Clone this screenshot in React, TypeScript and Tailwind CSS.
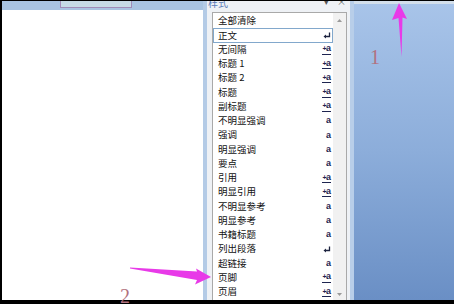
import React from 'react';

type Kind = 'none' | 'para' | 'link' | 'char';

const styles: { name: string; kind: Kind; selected?: boolean }[] = [
  { name: '全部清除', kind: 'none' },
  { name: '正文', kind: 'para', selected: true },
  { name: '无间隔', kind: 'link' },
  { name: '标题 1', kind: 'link' },
  { name: '标题 2', kind: 'link' },
  { name: '标题', kind: 'link' },
  { name: '副标题', kind: 'link' },
  { name: '不明显强调', kind: 'char' },
  { name: '强调', kind: 'char' },
  { name: '明显强调', kind: 'char' },
  { name: '要点', kind: 'char' },
  { name: '引用', kind: 'link' },
  { name: '明显引用', kind: 'link' },
  { name: '不明显参考', kind: 'char' },
  { name: '明显参考', kind: 'char' },
  { name: '书籍标题', kind: 'char' },
  { name: '列出段落', kind: 'para' },
  { name: '超链接', kind: 'char' },
  { name: '页脚', kind: 'link' },
  { name: '页眉', kind: 'link' },
];

const KindIcon = ({ kind }: { kind: Kind }) => {
  if (kind === 'none') return null;
  if (kind === 'para')
    return (
      <svg width="8" height="7" viewBox="0 0 8 7" className="block">
        <path d="M6.5 0.5 V4.5 H2.5" stroke="#1e2440" strokeWidth="1.3" fill="none" />
        <polygon points="0.5,4.5 3,2.5 3,6.5" fill="#1e2440" />
      </svg>
    );
  if (kind === 'char')
    return (
      <span className="font-['Liberation_Sans',sans-serif] font-bold text-[9px] leading-none text-[#1e2450]">a</span>
    );
  return (
    <span className="flex items-end border-b border-[#1e2450] leading-none text-[#1e2450] font-['Liberation_Sans',sans-serif] pb-[0.5px]">
      <span className="text-[7px] font-bold -mr-[0.5px] mb-[1px]">+</span>
      <span className="text-[9px] font-bold">a</span>
    </span>
  );
};

export default function App() {
  return (
    <div className="relative w-[454px] h-[304px] bg-black pl-[2px] pt-[1px] pb-[4px] flex overflow-hidden font-['Noto_Sans_CJK_SC',sans-serif]">
      {/* document page */}
      <div className="w-[201px] flex flex-col bg-white">
        <div className="h-[9px] bg-[#a9c4e2] shrink-0">
          <div className="ml-[58px] w-[72px] h-[7px] border border-t-0 border-[#a08cb8] bg-[#c6dae6]" />
        </div>
        <div className="flex-1 bg-white" />
      </div>

      {/* styles pane */}
      <div className="w-[151px] flex flex-col border-l-[4px] border-r-[4px] border-l-[#b4cbe6] border-r-[#b8cee9] bg-[#eef1f5]">
        <div className="h-[11px] shrink-0 flex justify-between items-start overflow-hidden px-[1px]">
          <span className="-mt-[4px] text-[10px] leading-[12px] text-[#5a7bb8]">样式</span>
          <span className="-mt-[4px] flex gap-[8px] text-[9px] leading-[10px] text-[#555] pr-[3px]">
            <span>▾</span>
            <span>×</span>
          </span>
        </div>
        <div className="ml-[5px] w-[135px] flex-1 flex border border-b-0 border-[#a9a9a9] bg-white">
          <div className="w-[120px] pt-[1px] flex flex-col">
            {styles.map((s) => (
              <div
                key={s.name}
                className={`h-[14.25px] shrink-0 flex items-center justify-between pl-[5px] pr-[2px] ${
                  s.selected ? 'outline outline-1 -outline-offset-1 outline-[#82a8cc]' : ''
                }`}
              >
                <span className="text-[9.5px] leading-none text-[#111]">{s.name}</span>
                <KindIcon kind={s.kind} />
              </div>
            ))}
          </div>
          <div className="flex-1 bg-[#f1f1f1] flex flex-col justify-between items-center pt-[6px] pb-[4px]">
            <svg width="5" height="3" viewBox="0 0 5 3">
              <polygon points="2.5,0 5,3 0,3" fill="#9a9a9a" />
            </svg>
            <svg width="5" height="3" viewBox="0 0 5 3">
              <polygon points="0,0 5,0 2.5,3" fill="#9a9a9a" />
            </svg>
          </div>
        </div>
      </div>

      {/* blue background */}
      <div className="flex-1 flex flex-col">
        <div className="h-[3px] bg-[#d3dfeb] shrink-0" />
        <div className="flex-1 bg-linear-to-b from-[#a8c4e9] via-[#8cadda] to-[#6a8fc5]" />
      </div>

      {/* annotations */}
      <svg className="absolute left-0 top-0 pointer-events-none" width="454" height="304" viewBox="0 0 454 304">
        <polygon points="399,3 407,19 402.5,17.5 401.5,57 398.5,18 392,20" fill="#e83ae8" />
        <polygon points="130,267.5 197,271.5 196,268.5 211,277 195,284.5 197,280 130,268.5" fill="#e83ae8" />
      </svg>
      <span className="absolute left-[370px] top-[47px] text-[20px] leading-none text-[#b27280] font-['Liberation_Serif',serif]">1</span>
      <span className="absolute left-[120px] top-[286px] text-[20px] leading-none text-[#b27280] font-['Liberation_Serif',serif]">2</span>
    </div>
  );
}
